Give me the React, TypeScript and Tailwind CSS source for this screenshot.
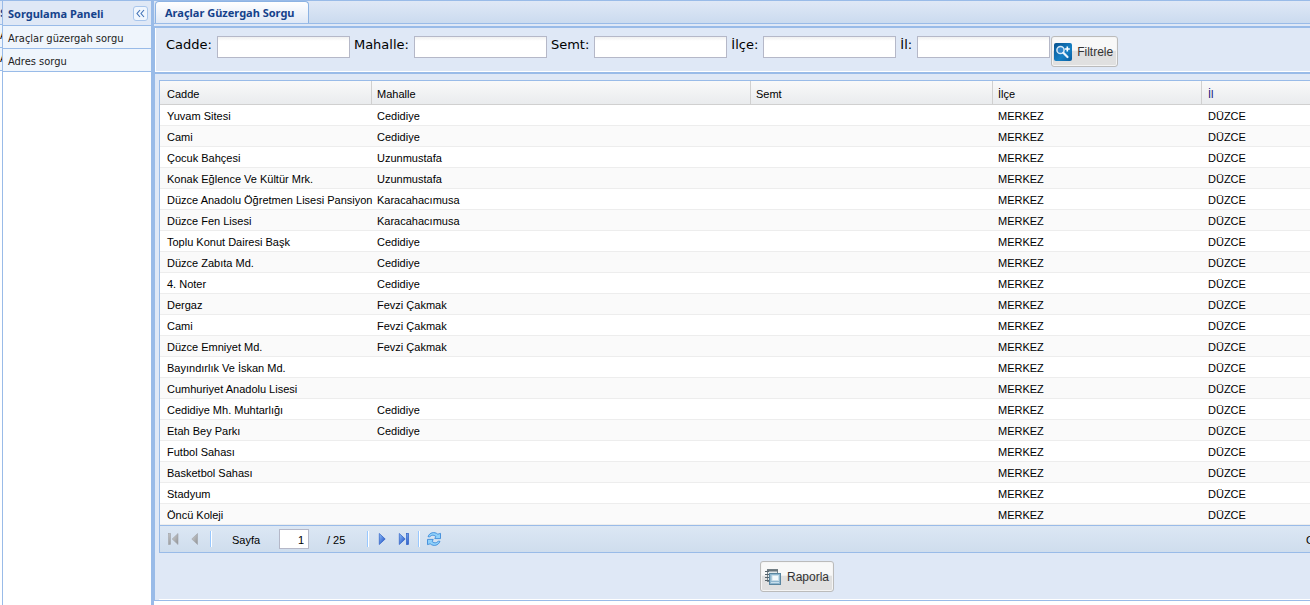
import React from "react";

type Row = [string, string];

const rows: Row[] = [
  ["Yuvam Sitesi", "Cedidiye"],
  ["Cami", "Cedidiye"],
  ["Çocuk Bahçesi", "Uzunmustafa"],
  ["Konak Eğlence Ve Kültür Mrk.", "Uzunmustafa"],
  ["Düzce Anadolu Öğretmen Lisesi Pansiyon", "Karacahacımusa"],
  ["Düzce Fen Lisesi", "Karacahacımusa"],
  ["Toplu Konut Dairesi Başk", "Cedidiye"],
  ["Düzce Zabıta Md.", "Cedidiye"],
  ["4. Noter", "Cedidiye"],
  ["Dergaz", "Fevzi Çakmak"],
  ["Cami", "Fevzi Çakmak"],
  ["Düzce Emniyet Md.", "Fevzi Çakmak"],
  ["Bayındırlık Ve İskan Md.", ""],
  ["Cumhuriyet Anadolu Lisesi", ""],
  ["Cedidiye Mh. Muhtarlığı", "Cedidiye"],
  ["Etah Bey Parkı", "Cedidiye"],
  ["Futbol Sahası", ""],
  ["Basketbol Sahası", ""],
  ["Stadyum", ""],
  ["Öncü Koleji", ""],
];

const columns = ["Cadde", "Mahalle", "Semt", "İlçe", "İl"];
const filters = ["Cadde:", "Mahalle:", "Semt:", "İlçe:", "İl:"];

function Gradients() {
  return (
    <defs>
      <linearGradient id="blue" x1="0" y1="0" x2="1" y2="1">
        <stop offset="0" stopColor="#8fc0fa" />
        <stop offset="1" stopColor="#1746c0" />
      </linearGradient>
      <linearGradient id="gray" x1="0" y1="0" x2="1" y2="1">
        <stop offset="0" stopColor="#d0d0d0" />
        <stop offset="1" stopColor="#8f9296" />
      </linearGradient>
      <linearGradient id="tile" x1="0" y1="0" x2="1" y2="1">
        <stop offset="0" stopColor="#06518f" />
        <stop offset="0.6" stopColor="#1680c4" />
        <stop offset="1" stopColor="#075ca0" />
      </linearGradient>
    </defs>
  );
}

function PagerIcon({ kind }: { kind: "first" | "prev" | "next" | "last" }) {
  return (
    <svg width="16" height="16" viewBox="0 0 16 16" aria-hidden="true">
      <Gradients />
      {kind === "first" && (
        <g fill="url(#gray)" stroke="#a0a3a7" strokeWidth="0.6">
          <rect x="3.4" y="2.5" width="2" height="11" />
          <path d="M13 2.5v11L7.2 8z" />
        </g>
      )}
      {kind === "prev" && <path d="M10.5 2.5v11L4.8 8z" fill="url(#gray)" stroke="#a0a3a7" strokeWidth="0.6" />}
      {kind === "next" && <path d="M6.3 2.5v11L12.2 8z" fill="url(#blue)" stroke="#2d5fc4" strokeWidth="0.7" />}
      {kind === "last" && (
        <g fill="url(#blue)" stroke="#2d5fc4" strokeWidth="0.7">
          <path d="M4.3 2.5v11L10.2 8z" />
          <rect x="11.4" y="2.5" width="2" height="11" />
        </g>
      )}
    </svg>
  );
}

function RefreshIcon() {
  return (
    <svg width="16" height="16" viewBox="0 0 16 16" aria-hidden="true">
      <g fill="#8fd0fa" stroke="#2f82d6" strokeWidth="0.8" strokeLinejoin="round">
        <path d="M2 5.6C3.6 1.6 8.2.2 11.8 3.2L14.5 2.4V7.6H8.8L9.8 5.4C7.6 3.6 5 4 3.6 6z" />
        <path d="M14 10.4C12.4 14.4 7.8 15.8 4.2 12.8L1.5 13.6V8.4H7.2L6.2 10.6C8.4 12.4 11 12 12.4 10z" />
      </g>
    </svg>
  );
}

function SearchTile() {
  return (
    <svg width="18" height="18" viewBox="0 0 18 18" aria-hidden="true">
      <Gradients />
      <rect width="18" height="18" rx="2" fill="url(#tile)" />
      <circle cx="6.5" cy="7" r="3.6" fill="#2f86cb" stroke="#d5e9f8" strokeWidth="1.5" />
      <path d="M9.3 9.8l4.2 4.2" stroke="#eaf5fd" strokeWidth="2.2" strokeLinecap="round" />
      <path d="M13.3 3.5v5M10.8 6h5" stroke="#fff" strokeWidth="1.6" />
    </svg>
  );
}

function ReportIcon() {
  return (
    <svg width="16" height="18" viewBox="0 0 16 18" aria-hidden="true">
      <rect x="2.5" y="1.5" width="10" height="12" fill="#e3e8ea" stroke="#7a868c" />
      <path d="M0 3.5h4M0 6.5h4M0 9.5h4M0 12.5h4" stroke="#56646c" />
      <path d="M2 2.5h11" stroke="#68757c" strokeWidth="2" />
      <rect x="4.5" y="5.5" width="11" height="11" fill="#8fb7cf" stroke="#5a86a0" />
      <rect x="7" y="7.5" width="6.5" height="5" fill="#f3f9fc" stroke="#c9dde8" />
      <path d="M6 14.5h8" stroke="#c8dfec" />
    </svg>
  );
}

function Separator() {
  return <span className="h-4 w-0.5 border-l border-r border-l-[#98c8ff] border-r-white" />;
}

const actionButton =
  "flex h-[31px] items-center rounded-[3px] border border-[#bbbbbb] bg-linear-to-b from-[#f8f8f8] from-45% to-[#e0e0e0] to-50% pt-px font-['Liberation_Sans',sans-serif] text-xs text-[#333333] shadow-[inset_0_0_0_1px_#f4f4f4]";

export default function App() {
  return (
    <div className="flex min-h-screen overflow-hidden bg-white text-[11px] leading-[14px] text-black">
      <div className="w-0.5 shrink-0 overflow-hidden border-t border-[#99bbe8] bg-white font-['DejaVu_Sans_Condensed','DejaVu_Sans',sans-serif]">
        <div className="h-6 border-b border-[#99bbe8] bg-[#dfe8f6] py-1.5 font-bold text-[#15428b]">S</div>
        <div className="h-[23px] border-b border-[#99bbe8] bg-[#eff5fc] py-1">A</div>
        <div className="h-[23px] border-b border-[#99bbe8] bg-[#eff5fc] py-1">A</div>
      </div>

      <aside className="w-[150px] shrink-0 border-t border-r border-l border-[#99bbe8] bg-white font-['DejaVu_Sans_Condensed','DejaVu_Sans',sans-serif] text-[#222222]">
        <div className="flex h-[25px] items-center justify-between border-b border-[#99bbe8] bg-[#dfe8f6] pr-[3px] pl-[5px]">
          <h1 className="pt-0.5 font-['Noto_Sans',sans-serif] text-[11px] font-bold whitespace-nowrap text-[#15428b]">Sorgulama Paneli</h1>
          <button type="button" aria-label="Paneli daralt" className="flex size-[15px] items-center justify-center rounded-[3px] border border-[#a9c6ec] bg-[#f0f6fe]">
            <svg width="9" height="9" viewBox="0 0 9 9" fill="none" stroke="#3f70b5" aria-hidden="true">
              <path d="M4 1L1 4.5L4 8M8 1L5 4.5L8 8" strokeWidth="1.1" />
            </svg>
          </button>
        </div>
        <nav>
          <a href="#guzergah" className="flex h-[23px] items-center border-b border-[#99bbe8] bg-[#eff5fc] pt-[3px] pl-[5px] whitespace-nowrap">Araçlar güzergah sorgu</a>
          <a href="#adres" className="flex h-[23px] items-center border-b border-[#99bbe8] bg-[#eff5fc] pt-[3px] pl-[5px] whitespace-nowrap">Adres sorgu</a>
        </nav>
      </aside>

      <main className="min-w-0 grow overflow-hidden border-l-2 border-[#99bbe8] bg-white">
        <div className="flex h-6 items-end border-t border-b border-[#99bbe8] bg-linear-to-b from-[#dfe8f6] to-[#cbdbef] pl-px">
          <button type="button" className="h-[22px] min-w-[154px] rounded-t-[4px] border border-b-0 border-[#8db3e3] bg-linear-to-b from-white to-[#dfe8f6] px-[9px] text-left font-['Noto_Sans',sans-serif] font-bold whitespace-nowrap text-[#15428b]">
            Araçlar Güzergah Sorgu
          </button>
        </div>
        <div className="h-0.5 bg-[#dfe8f6]" />

        <div className="border-t-2 border-b border-l border-[#99bbe8] bg-[#dfe8f6]">
          <form className="flex h-11 items-start border-b border-l border-white pt-2 pl-2.5 font-['DejaVu_Sans',sans-serif] text-[13px]">
            {filters.map((label) => (
              <label key={label} className="mr-1 flex items-start gap-[5px] whitespace-nowrap last-of-type:mr-px">
                <span className="pt-px leading-4">{label}</span>
                <input type="text" className="h-[22px] w-[133px] border border-[#b5b8c8] bg-linear-to-b from-[#f0f0f0] via-white via-20% to-white px-1 text-xs outline-none" />
              </label>
            ))}
            <button type="button" className={actionButton + " shrink-0 gap-[5px] pr-1 pl-0.5"}>
              <SearchTile />
              Filtrele
            </button>
          </form>

          <section className="border-t-2 border-[#99bbe8] bg-[#dfe8f6] pt-1.5 pl-1 font-['Liberation_Sans',sans-serif]">
            <div className="border-t border-l border-[#99bbe8] bg-white">
              <table className="w-full table-fixed border-separate border-spacing-0 text-left">
                <colgroup>
                  <col className="w-[212px]" />
                  <col className="w-[379px]" />
                  <col className="w-[242px]" />
                  <col className="w-[209px]" />
                  <col />
                </colgroup>
                <thead>
                  <tr className="h-6 bg-linear-to-b from-[#f9f9f9] to-[#e9ebed]">
                    {columns.map((column) => (
                      <th key={column} scope="col" className="border-r border-b border-[#d0d0d0] px-[5px] pt-0.5 font-normal first:pl-[7px] last:border-r-0 last:pl-1.5 last:text-[#15157a]">
                        {column}
                      </th>
                    ))}
                  </tr>
                </thead>
                <tbody>
                  {rows.map(([street, quarter], index) => (
                    <tr key={index} className="h-[21px] even:bg-[#fafafa]">
                      {[street, quarter, "", "MERKEZ", "DÜZCE"].map((cell, column) => (
                        <td key={column} className="border-b border-[#ededed] p-0 pt-0.5 pl-[5px] whitespace-nowrap first:pl-[7px] last:pl-1.5">
                          {cell}
                        </td>
                      ))}
                    </tr>
                  ))}
                </tbody>
              </table>

              <div className="flex h-7 items-center border-t border-b border-[#99bbe8] bg-linear-to-b from-[#dce7f4] to-[#cfdded] pl-[5px]">
                <button type="button" aria-label="İlk sayfa" className="mr-1.5"><PagerIcon kind="first" /></button>
                <button type="button" aria-label="Önceki sayfa" className="mr-[7px]"><PagerIcon kind="prev" /></button>
                <Separator />
                <label htmlFor="page" className="ml-5 w-[47px] pt-0.5">Sayfa</label>
                <input id="page" type="text" defaultValue="1" className="h-5 w-[30px] border border-[#b5b8c8] bg-white px-1 pt-0.5 text-right outline-none" />
                <span className="ml-[18px] w-10 pt-0.5">/ 25</span>
                <Separator />
                <button type="button" aria-label="Sonraki sayfa" className="mr-1.5 ml-1"><PagerIcon kind="next" /></button>
                <button type="button" aria-label="Son sayfa" className="mr-[7px]"><PagerIcon kind="last" /></button>
                <Separator />
                <button type="button" aria-label="Yenile" className="ml-1.5"><RefreshIcon /></button>
                <span className="ml-auto w-1 overflow-hidden pt-0.5">G</span>
              </div>
            </div>

            <div className="flex h-[47px] justify-center border-b border-white pt-2 pl-[125px]">
              <button type="button" className={actionButton + " gap-1.5 px-1"}>
                <ReportIcon />
                Raporla
              </button>
            </div>
          </section>
        </div>
      </main>
    </div>
  );
}
